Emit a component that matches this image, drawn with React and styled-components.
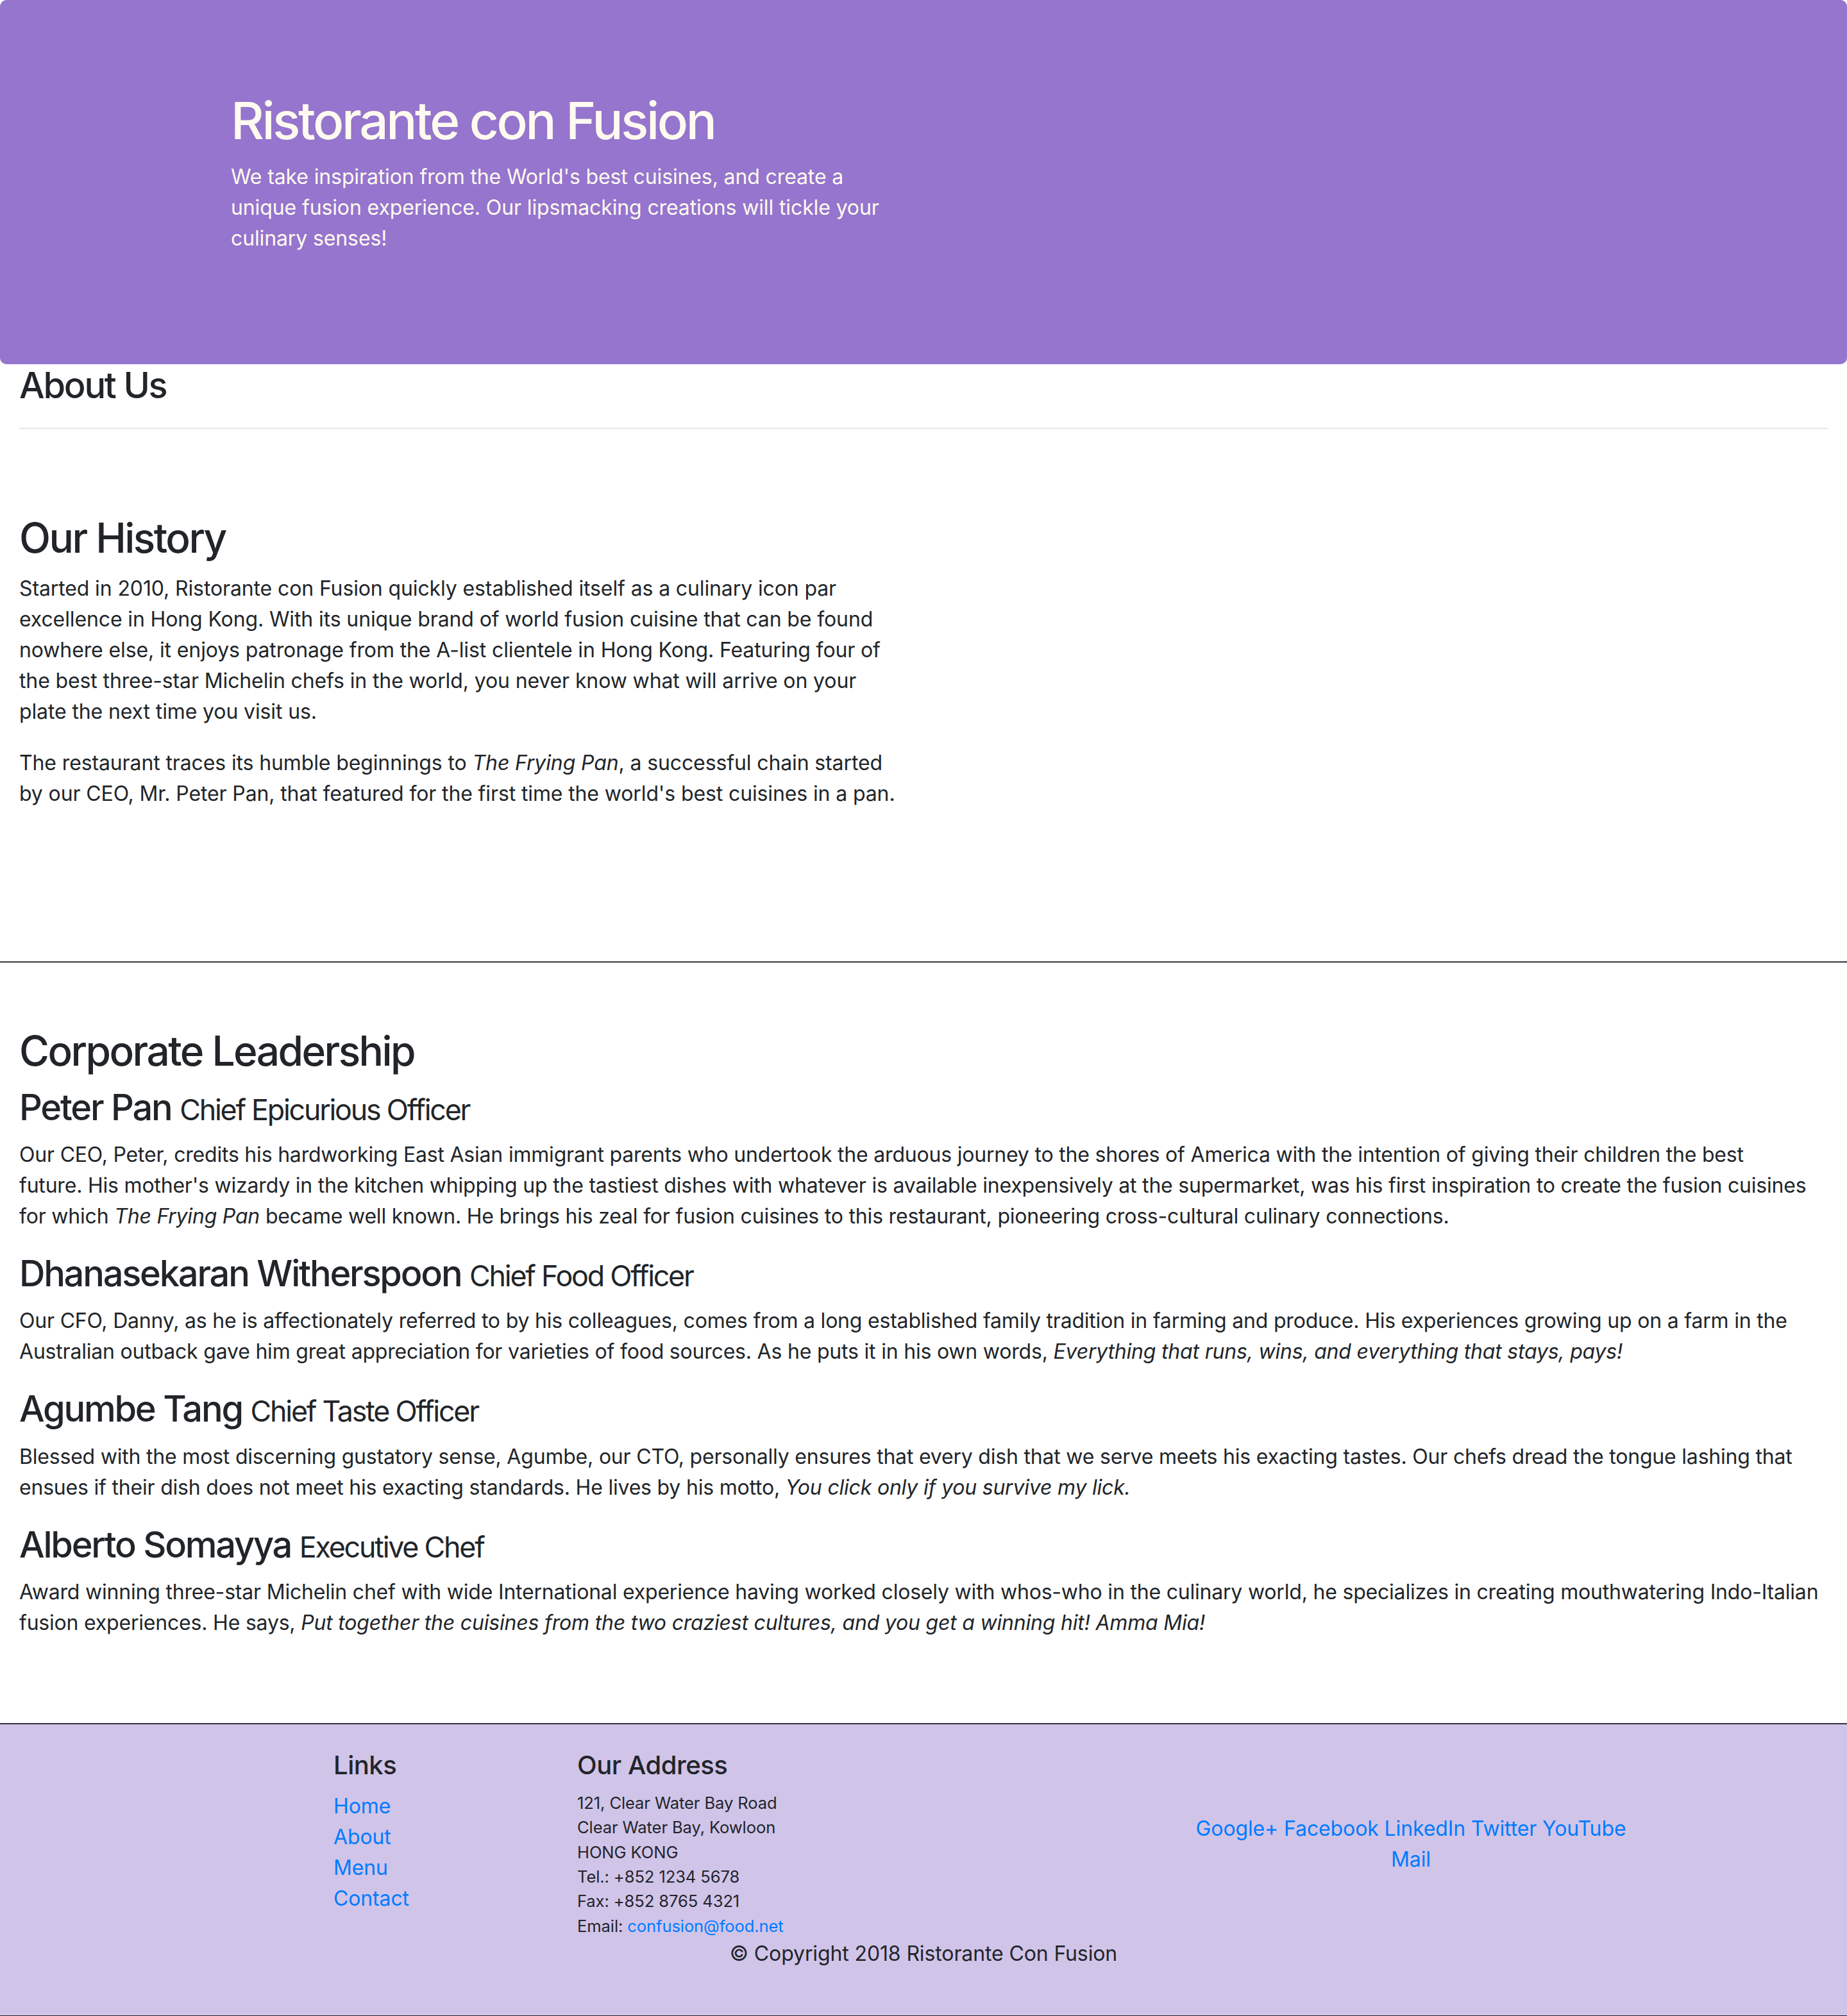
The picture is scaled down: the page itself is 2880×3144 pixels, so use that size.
import React from 'react';
import styled, { createGlobalStyle } from 'styled-components';

const GlobalStyle = createGlobalStyle`
  *, *::before, *::after {
    box-sizing: border-box;
  }

  body {
    margin: 0;
    font-family: Inter, "Noto Sans", "Liberation Sans", sans-serif;
    font-size: 32px;
    line-height: 1.5;
    letter-spacing: -0.12px;
    color: #212529;
    background-color: #fff;
  }
`;

const Jumbotron = styled.header`
  padding: 140px 60px;
  background-color: #9575cd;
  color: floralwhite;
  border-radius: 10px;
`;

const Container = styled.div`
  max-width: 2280px;
  margin: 0 auto;
  padding: 0 30px;
`;

const HeaderCol = styled.div`
  width: 50%;
  padding: 0 30px;

  h1 {
    margin: 0 0 16px;
    font-size: 80px;
    font-weight: 500;
    line-height: 1.2;
    letter-spacing: -0.042em;
  }

  p {
    margin: 0 0 32px;
  }
`;

const Row = styled.section`
  display: flex;
  flex-wrap: wrap;
  padding: ${(p) => (p.$content ? '100px 0' : '0')};
  min-height: ${(p) => (p.$content ? '800px' : '0')};
  border-bottom: ${(p) => (p.$content ? '2px ridge #212529' : 'none')};
`;

const Col = styled.div`
  flex: 0 0 ${(p) => (p.$half ? '50%' : '100%')};
  max-width: ${(p) => (p.$half ? '50%' : '100%')};
  padding: 0 30px;
`;

const Heading = styled.h2`
  margin: 0 0 16px;
  font-size: ${(p) => p.$size}px;
  font-weight: 500;
  line-height: 1.2;
  letter-spacing: -0.04em;
`;

const Rule = styled.hr`
  margin: 32px 0;
  border: 0;
  border-top: 2px solid rgba(0, 0, 0, 0.1);
`;

const Para = styled.p`
  margin: 0 0 32px;
`;

const LeaderText = styled(Para)`
  letter-spacing: -0.2px;
`;

const Small = styled.small`
  font-size: 80%;
  font-weight: 400;
  letter-spacing: -0.05em;
`;

const LeaderList = styled.ul`
  margin: 0;
  padding: 0;
  list-style: none;
`;

const Footer = styled.footer`
  padding: 40px 0;
  background-color: #d1c4e9;
  border-bottom: 2px solid #212529;
`;

const FooterRow = styled.div`
  display: flex;
  flex-wrap: wrap;
  justify-content: center;
  margin: 0 -30px;
`;

const FooterCol = styled.div`
  flex: 0 0 ${(p) => p.$span};
  max-width: ${(p) => p.$span};
  margin-left: ${(p) => p.$offset || 0}px;
  padding: 0 30px;
  align-self: ${(p) => (p.$center ? 'center' : 'auto')};
  text-align: ${(p) => (p.$center ? 'center' : 'left')};
`;

const FooterTitle = styled.h5`
  margin: 0 0 16px;
  font-size: 40px;
  font-weight: 500;
  line-height: 1.2;
  letter-spacing: -0.012em;
`;

const LinkList = styled.ul`
  margin: 0 0 32px;
  padding: 0;
  list-style: none;
`;

const Link = styled.a`
  color: #007bff;
  text-decoration: none;
`;

const Address = styled.address`
  margin: 0;
  font-size: 80%;
  font-style: normal;
`;

const Copyright = styled.p`
  margin: 0 0 32px;
`;

const leaders = [
  {
    name: 'Peter Pan',
    role: 'Chief Epicurious Officer',
    text: (
      <>
        Our CEO, Peter, credits his hardworking East Asian immigrant parents who undertook the arduous journey to the
        shores of America with the intention of giving their children the best
        <br />
        future. His mother's wizardy in the kitchen whipping up the tastiest dishes with whatever is available
        inexpensively at the supermarket, was his first inspiration to create the fusion cuisines for which{' '}
        <em>The Frying Pan</em> became well known. He brings his zeal for fusion cuisines to this restaurant, pioneering
        cross-cultural culinary connections.
      </>
    ),
  },
  {
    name: 'Dhanasekaran Witherspoon',
    role: 'Chief Food Officer',
    text: (
      <>
        Our CFO, Danny, as he is affectionately referred to by his colleagues, comes from a long established family
        tradition in farming and produce. His experiences growing up on a farm in the Australian outback gave him great
        appreciation for varieties of food sources. As he puts it in his own words,{' '}
        <em>Everything that runs, wins, and everything that stays, pays!</em>
      </>
    ),
  },
  {
    name: 'Agumbe Tang',
    role: 'Chief Taste Officer',
    text: (
      <>
        Blessed with the most discerning gustatory sense, Agumbe, our CTO, personally ensures that every dish that we
        serve meets his exacting tastes. Our chefs dread the tongue lashing that ensues if their dish does not meet his
        exacting standards. He lives by his motto, <em>You click only if you survive my lick.</em>
      </>
    ),
  },
  {
    name: 'Alberto Somayya',
    role: 'Executive Chef',
    text: (
      <>
        Award winning three-star Michelin chef with wide International experience having worked closely with whos-who
        in the culinary world, he specializes in creating mouthwatering Indo-Italian fusion experiences. He says,{' '}
        <em>Put together the cuisines from the two craziest cultures, and you get a winning hit! Amma Mia!</em>
      </>
    ),
  },
];

const socials = ['Google+', 'Facebook', 'LinkedIn', 'Twitter', 'YouTube', 'Mail'];

const App = () => {
  return (
    <>
      <GlobalStyle />
      <Jumbotron>
        <Container>
          <HeaderCol>
            <h1>Ristorante con Fusion</h1>
            <p>
              We take inspiration from the World's best cuisines, and create a unique fusion experience. Our
              lipsmacking creations will tickle your culinary senses!
            </p>
          </HeaderCol>
        </Container>
      </Jumbotron>

      <Row>
        <Col>
          <Heading as="h3" $size={56}>About Us</Heading>
          <Rule />
        </Col>
      </Row>

      <Row $content>
        <Col $half>
          <Heading $size={64}>Our History</Heading>
          <Para>
            Started in 2010, Ristorante con Fusion quickly established itself as a culinary icon par excellence in Hong
            Kong. With its unique brand of world fusion cuisine that can be found nowhere else, it enjoys patronage from
            the A-list clientele in Hong Kong. Featuring four of the best three-star Michelin chefs in the world, you
            never know what will arrive on your plate the next time you visit us.
          </Para>
          <Para>
            The restaurant traces its humble beginnings to <em>The Frying Pan</em>, a successful chain started by our
            CEO, Mr. Peter Pan, that featured for the first time the world's best cuisines in a pan.
          </Para>
        </Col>
      </Row>

      <Row $content>
        <Col>
          <Heading $size={64}>Corporate Leadership</Heading>
          <LeaderList>
            {leaders.map((l) => (
              <li key={l.name}>
                <Heading as="h3" $size={56}>
                  {l.name} <Small>{l.role}</Small>
                </Heading>
                <LeaderText>{l.text}</LeaderText>
              </li>
            ))}
          </LeaderList>
        </Col>
      </Row>

      <Footer>
        <Container>
          <FooterRow>
            <FooterCol $span="380px" $offset={190}>
              <FooterTitle>Links</FooterTitle>
              <LinkList>
                <li><Link href="#">Home</Link></li>
                <li><Link href="#">About</Link></li>
                <li><Link href="#">Menu</Link></li>
                <li><Link href="#">Contact</Link></li>
              </LinkList>
            </FooterCol>
            <FooterCol $span="950px">
              <FooterTitle>Our Address</FooterTitle>
              <Address>
                121, Clear Water Bay Road<br />
                Clear Water Bay, Kowloon<br />
                HONG KONG<br />
                Tel.: +852 1234 5678<br />
                Fax: +852 8765 4321<br />
                Email: <Link href="#">confusion@food.net</Link>
              </Address>
            </FooterCol>
            <FooterCol $span="760px" $center>
              {socials.map((s, i) => (
                <React.Fragment key={s}>
                  <Link href="#">{s}</Link>
                  {i < socials.length - 1 ? ' ' : ''}
                </React.Fragment>
              ))}
            </FooterCol>
          </FooterRow>
          <FooterRow>
            <FooterCol $span="auto">
              <Copyright>© Copyright 2018 Ristorante Con Fusion</Copyright>
            </FooterCol>
          </FooterRow>
        </Container>
      </Footer>
    </>
  );
};

export default App;
